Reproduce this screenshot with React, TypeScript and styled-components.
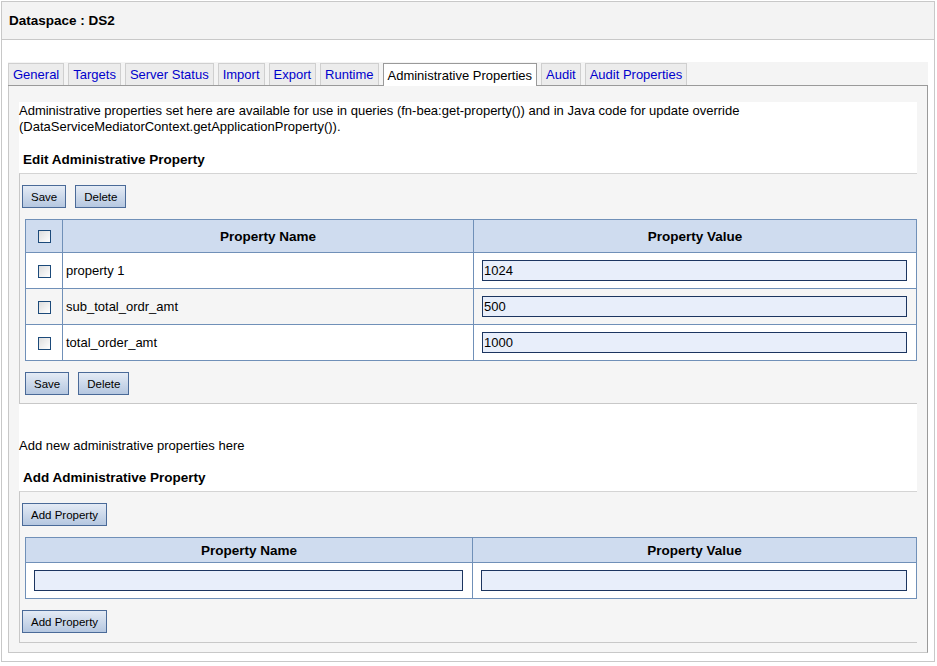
import React from "react";
import styled, { createGlobalStyle } from "styled-components";

const Global = createGlobalStyle`
  html, body { margin: 0; padding: 0; background: #fff; }
  body { font-family: "Liberation Sans", Arial, sans-serif; font-size: 13px; color: #000; }
`;

const Outer = styled.div`
  margin: 1px; width: 934px; height: 661px; border: 1px solid #c8c8c8; box-sizing: border-box;
  display: flex; flex-direction: column;
`;
const Header = styled.div`
  height: 37px; background: #f3f3f3; border-bottom: 1px solid #c8c8c8;
  display: flex; align-items: center; padding-left: 7px; font-weight: bold; font-size: 13.5px;
`;
const Body = styled.div`padding: 22px 5px 0 6px; display: flex; flex-direction: column;`;
const TabStrip = styled.div`
  display: flex; gap: 4px; background: #f4f4f4; width: 920px; height: 24px; box-sizing: border-box;
  border-bottom: 1px solid #9a9a9a; padding-top: 1px; align-items: stretch;
`;
const Tab = styled.div<{ $active?: boolean }>`
  padding: 0 4px; display: flex; align-items: center; font-size: 13px;
  border: 1px solid ${p => (p.$active ? "#9a9a9a" : "#cfcfcf")};
  border-bottom: none;
  background: ${p => (p.$active ? "#fff" : "#ececec")};
  color: ${p => (p.$active ? "#000" : "#0000cc")};
  margin-bottom: ${p => (p.$active ? "-1px" : "0")};
`;
const Panel = styled.div`
  width: 920px; height: 567px; box-sizing: border-box; background: #f5f5f5;
  border-left: 1px solid #c8c8c8; border-right: 1px solid #9a9a9a; border-bottom: 1px solid #c8c8c8;
  padding: 16px 10px 0 10px;
`;
const WhiteBlock = styled.div<{ $h: number }>`
  background: #fff; height: ${p => p.$h}px; box-sizing: border-box;
  display: flex; flex-direction: column;
`;
const Desc = styled.div`line-height: 16px; padding-top: 1px;`;
const Heading = styled.div`font-weight: bold; font-size: 13.5px; margin-top: auto; padding: 0 0 6px 4px;`;
const Section = styled.div<{ $h: number }>`
  height: ${p => p.$h}px; box-sizing: border-box; border-top: 1px solid #d4d4d4;
  border-left: 1px solid #c8c8c8; border-bottom: 1px solid #c8c8c8;
  padding: 11px 0 0 2px; display: flex; flex-direction: column; gap: 11px;
`;
const BtnRow = styled.div<{ $pl?: number }>`display: flex; gap: 9px; padding-left: ${p => p.$pl || 0}px;`;
const Button = styled.button`
  height: 23px; padding: 0 8px; font-family: inherit; font-size: 11.5px; color: #000;
  border: 1px solid #4a6a98; border-radius: 0;
  background: linear-gradient(#e4ebf5, #b5c7e0); cursor: pointer;
`;
const Table = styled.table`
  width: 892px; margin-left: 3px; border-collapse: collapse; background: #fff;
  th, td { border: 1px solid #7090b8; }
  th { background: #cfdcef; font-weight: bold; font-size: 13.5px; padding: 0; }
`;
const Row = styled.tr<{ $alt?: boolean }>`
  height: 36px; background: ${p => (p.$alt ? "#f5f5f5" : "#fff")};
  td { padding: 0 3px; }
`;
const Box = styled.span`
  display: inline-block; width: 11px; height: 11px; border: 1px solid #1c4a7a;
  background: linear-gradient(135deg, #ddd, #fff); vertical-align: middle;
`;
const Input = styled.input`
  width: 100%; height: 21px; box-sizing: border-box; border: 1px solid #1c3560;
  background: #e8eefa; font-family: inherit; font-size: 13px; padding: 0 1px;
`;

const props = [
  ["property 1", "1024"],
  ["sub_total_ordr_amt", "500"],
  ["total_order_amt", "1000"],
];
const tabs = ["General", "Targets", "Server Status", "Import", "Export", "Runtime", "Administrative Properties", "Audit", "Audit Properties"];

export default function App() {
  return (
    <>
      <Global />
      <Outer>
        <Header>Dataspace : DS2</Header>
        <Body>
          <TabStrip>
            {tabs.map(t => (
              <Tab key={t} $active={t === "Administrative Properties"}>{t}</Tab>
            ))}
          </TabStrip>
          <Panel>
            <WhiteBlock $h={71}>
              <Desc>
                Administrative properties set here are available for use in queries (fn-bea:get-property()) and in Java code for update override
                <br />(DataServiceMediatorContext.getApplicationProperty()).
              </Desc>
              <Heading>Edit Administrative Property</Heading>
            </WhiteBlock>
            <Section $h={231}>
              <BtnRow><Button>Save</Button><Button>Delete</Button></BtnRow>
              <Table>
                <thead>
                  <tr style={{ height: 33 }}>
                    <th style={{ width: 36 }}><Box /></th>
                    <th style={{ width: 410 }}>Property Name</th>
                    <th>Property Value</th>
                  </tr>
                </thead>
                <tbody>
                  {props.map(([n, v], i) => (
                    <Row key={n} $alt={i === 1}>
                      <td style={{ textAlign: "center" }}><Box /></td>
                      <td>{n}</td>
                      <td style={{ paddingLeft: 8, paddingRight: 9 }}><Input defaultValue={v} /></td>
                    </Row>
                  ))}
                </tbody>
              </Table>
              <BtnRow $pl={3}><Button>Save</Button><Button>Delete</Button></BtnRow>
            </Section>
            <WhiteBlock $h={87}>
              <Desc style={{ marginTop: 33 }}>Add new administrative properties here</Desc>
              <Heading>Add Administrative Property</Heading>
            </WhiteBlock>
            <Section $h={152}>
              <BtnRow><Button>Add Property</Button></BtnRow>
              <Table>
                <thead>
                  <tr style={{ height: 25 }}>
                    <th style={{ width: 446 }}>Property Name</th>
                    <th>Property Value</th>
                  </tr>
                </thead>
                <tbody>
                  <Row>
                    <td style={{ paddingLeft: 8, paddingRight: 9 }}><Input /></td>
                    <td style={{ paddingLeft: 8, paddingRight: 9 }}><Input /></td>
                  </Row>
                </tbody>
              </Table>
              <BtnRow><Button>Add Property</Button></BtnRow>
            </Section>
          </Panel>
        </Body>
      </Outer>
    </>
  );
}
